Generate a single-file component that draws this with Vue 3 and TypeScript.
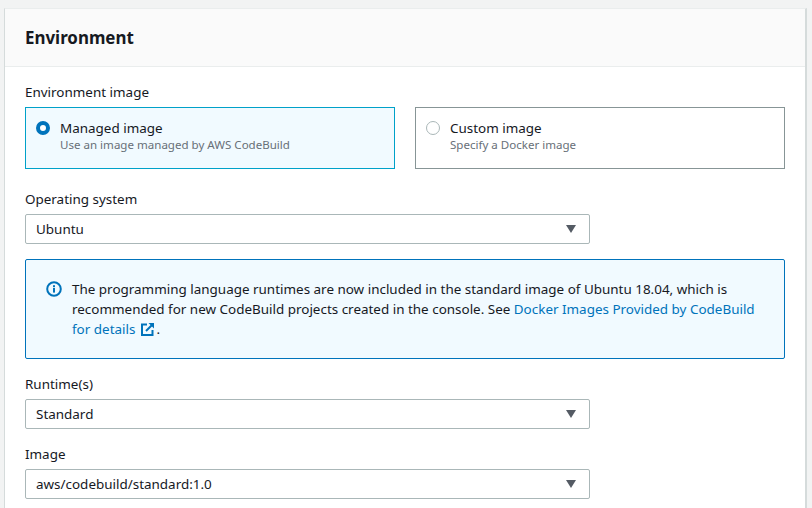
<script setup lang="ts">
interface Tile {
  title: string
  hint: string
  checked: boolean
}

const tiles: Tile[] = [
  { title: 'Managed image', hint: 'Use an image managed by AWS CodeBuild', checked: true },
  { title: 'Custom image', hint: 'Specify a Docker image', checked: false },
]
</script>

<template>
  <main class="page">
    <section class="panel">
      <header class="panel-header">
        <h2>Environment</h2>
      </header>
      <div class="panel-body">
        <div class="field">
          <div class="label">Environment image</div>
          <div class="tiles">
            <div v-for="tile in tiles" :key="tile.title" class="tile" :class="{ checked: tile.checked }">
              <span class="radio"></span>
              <div>
                <div class="tile-title">{{ tile.title }}</div>
                <div class="tile-hint">{{ tile.hint }}</div>
              </div>
            </div>
          </div>
        </div>

        <div class="field os-field">
          <div class="label">Operating system</div>
          <div class="select">
            <span>Ubuntu</span>
            <i class="caret"></i>
          </div>
        </div>

        <div class="alert">
          <svg class="alert-icon" width="16" height="16" viewBox="0 0 16 16" fill="none">
            <circle cx="8" cy="8" r="6.8" stroke="#0073bb" stroke-width="2" />
            <rect x="7" y="7" width="2" height="4.6" fill="#0073bb" />
            <rect x="7" y="4.2" width="2" height="2" fill="#0073bb" />
          </svg>
          <p>
            The programming language runtimes are now included in the standard image of Ubuntu 18.04, which is
            recommended for new CodeBuild projects created in the console. See
            <a href="#">Docker Images Provided by CodeBuild for details<svg class="ext" width="13" height="13" viewBox="0 0 13 13" fill="none">
                <path d="M6 1.5H1v10.5h10.5V7" stroke="#0073bb" stroke-width="2" />
                <path d="M5 8 11 2" stroke="#0073bb" stroke-width="2" />
                <path d="M7.5 0H13v5.5z" fill="#0073bb" />
              </svg></a>.
          </p>
        </div>

        <div class="field runtime-field">
          <div class="label">Runtime(s)</div>
          <div class="select">
            <span>Standard</span>
            <i class="caret"></i>
          </div>
        </div>

        <div class="field image-field">
          <div class="label">Image</div>
          <div class="select">
            <span>aws/codebuild/standard:1.0</span>
            <i class="caret"></i>
          </div>
        </div>
      </div>
    </section>
  </main>
</template>

<style>
html,
body {
  margin: 0;
  overflow: hidden;
  background: #f2f3f3;
}
</style>

<style scoped>
.page {
  height: 508px;
  padding: 8px 5px 0 4px;
  box-sizing: border-box;
  overflow: hidden;
  color: #16191f;
  font-family: 'Noto Sans', 'Open Sans', sans-serif;
  font-size: 13.45px;
  line-height: 22px;
}

.panel {
  height: 600px;
  background: #fff;
  border: 1px solid #eaeded;
  border-left-color: #d5dbdb;
  border-right: 2px solid #d5dbdb;
}

.panel-header {
  height: 58px;
  box-sizing: border-box;
  padding: 18px 20px 0;
  background: #fafafa;
  border-bottom: 1px solid #eaeded;
}

h2 {
  margin: 0;
  font-size: 16.9px;
  font-weight: 700;
  line-height: 22px;
}

.panel-body {
  padding: 14px 20px 0;
}

.label {
  height: 22px;
  margin-bottom: 4px;
}

.tiles {
  display: flex;
  gap: 20px;
}

.tile {
  flex: 0 0 370px;
  height: 62px;
  box-sizing: border-box;
  display: flex;
  gap: 10px;
  padding: 10px 10px 0 10px;
  border: 1px solid #879596;
}

.tile.checked {
  background: #f1faff;
  border-color: #00a1c9;
}

.radio {
  width: 14px;
  height: 14px;
  margin-top: 3px;
  flex: none;
  box-sizing: border-box;
  border: 1px solid #aab7b8;
  border-radius: 50%;
  background: #fff;
}

.checked .radio {
  border: 4px solid #0073bb;
}

.tile-title {
  line-height: 20px;
}

.tile-hint {
  font-size: 11.55px;
  line-height: 14px;
  color: #687078;
}

.os-field {
  margin-top: 19px;
}

.select {
  width: 565px;
  height: 30px;
  box-sizing: border-box;
  display: flex;
  align-items: center;
  justify-content: space-between;
  padding: 0 13px 0 10px;
  border: 1px solid #aab7b8;
  border-radius: 2px;
  background: #fff;
}

.caret {
  width: 0;
  height: 0;
  border-left: 5px solid transparent;
  border-right: 5px solid transparent;
  border-top: 8px solid #545b64;
}

.alert {
  width: 760px;
  height: 100px;
  margin-top: 15px;
  box-sizing: border-box;
  display: flex;
  gap: 10px;
  padding: 19px 20px 0;
  border: 1px solid #0073bb;
  border-radius: 2px;
  background: #f1faff;
}

.alert-icon {
  flex: none;
  margin-top: 2px;
}

.alert p {
  margin: 0;
  line-height: 20px;
}

.alert a {
  color: #0073bb;
  text-decoration: none;
}

.ext {
  margin-left: 6px;
  margin-right: 2px;
  vertical-align: -2px;
}

.runtime-field {
  margin-top: 14px;
}

.image-field {
  margin-top: 14px;
}
</style>
